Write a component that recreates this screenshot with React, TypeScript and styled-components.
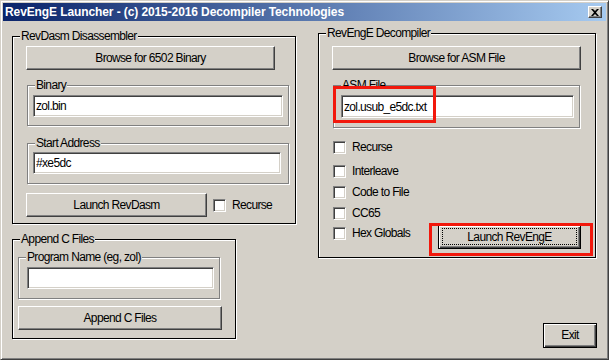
import React from "react";
import styled, { createGlobalStyle } from "styled-components";

const GlobalStyle = createGlobalStyle`
  html, body {
    margin: 0;
    padding: 0;
    background: #d4d0c8;
  }
  body {
    font-family: "Liberation Sans", Arial, sans-serif;
    font-size: 12px;
    color: #000;
  }
`;

const FACE = "#d4d0c8";
const RED = "#f2180c";
const TEXT_SPACING = "-0.65px";

const Window = styled.div`
  box-sizing: border-box;
  width: 609px;
  height: 360px;
  display: flex;
  flex-direction: column;
  background: ${FACE};
  border: 1px solid;
  border-color: ${FACE} #404040 #404040 ${FACE};
  box-shadow: inset 1px 1px 0 #fff, inset -1px -1px 0 #808080;
  padding: 2px;
`;

const TitleBar = styled.div`
  height: 18px;
  flex: none;
  display: flex;
  align-items: center;
  justify-content: space-between;
  padding: 0 4px 0 2px;
  background: linear-gradient(to right, #0a246a, #a6caf0);
`;

const TitleText = styled.span`
  color: #fff;
  font-weight: bold;
  font-size: 12px;
  letter-spacing: -0.1px;
  white-space: nowrap;
`;

const CloseButton = styled.div`
  box-sizing: border-box;
  width: 14px;
  height: 12px;
  display: flex;
  align-items: center;
  justify-content: center;
  background: ${FACE};
  border: 1px solid;
  border-color: #fff #404040 #404040 #fff;
  box-shadow: inset -1px -1px 0 #808080;
`;

const Body = styled.div`
  flex: 1;
  display: flex;
  gap: 22px;
  padding: 12px 0 0 9px;
`;

const Column = styled.div<{ $w: number }>`
  width: ${(p) => p.$w}px;
  display: flex;
  flex-direction: column;
  align-items: flex-start;
`;

const Group = styled.div<{
  $w: number;
  $h: number;
  $inner?: boolean;
  $mt?: number;
  $ml?: number;
  $pad?: string;
}>`
  position: relative;
  box-sizing: border-box;
  width: ${(p) => p.$w}px;
  height: ${(p) => p.$h}px;
  margin-top: ${(p) => p.$mt ?? 0}px;
  margin-left: ${(p) => p.$ml ?? 0}px;
  padding: ${(p) => p.$pad ?? "0"};
  border: 1px solid ${(p) => (p.$inner ? "#808080" : "#000")};
  box-shadow: inset 1px 1px 0 #fff, 1px 1px 0 #fff;
  display: flex;
  flex-direction: column;
  align-items: flex-start;
`;

const Caption = styled.span`
  position: absolute;
  top: -8px;
  left: 7px;
  padding: 0 1px;
  line-height: 14px;
  background: ${FACE};
  white-space: nowrap;
  letter-spacing: ${TEXT_SPACING};
`;

const Button = styled.button<{
  $w: number;
  $h: number;
  $mt?: number;
  $ml?: number;
  $default?: boolean;
}>`
  box-sizing: border-box;
  width: ${(p) => p.$w}px;
  height: ${(p) => p.$h}px;
  margin: ${(p) => p.$mt ?? 0}px 0 0 ${(p) => p.$ml ?? 0}px;
  padding: 0;
  display: flex;
  align-items: stretch;
  justify-content: center;
  font-family: "Liberation Sans", Arial, sans-serif;
  font-size: 12px;
  letter-spacing: ${TEXT_SPACING};
  color: #000;
  background: ${FACE};
  border: 1px solid;
  border-color: ${(p) => (p.$default ? "#000" : "#fff #404040 #404040 #fff")};
  box-shadow: ${(p) =>
    p.$default
      ? "inset 1px 1px 0 #fff, inset -1px -1px 0 #404040, inset -2px -2px 0 #808080"
      : "inset -1px -1px 0 #808080"};
  flex: none;
`;

const ButtonLabel = styled.span`
  flex: 1;
  display: flex;
  align-items: center;
  justify-content: center;
  padding-bottom: 1px;
`;

const FocusRing = styled.span`
  flex: 1;
  display: flex;
  align-items: center;
  justify-content: center;
  margin: 2px 3px 3px 3px;
  border: 1px dotted #000;
`;

const Field = styled.input<{ $w: number; $h: number; $mt: number; $ml: number }>`
  box-sizing: border-box;
  width: ${(p) => p.$w}px;
  height: ${(p) => p.$h}px;
  margin: ${(p) => p.$mt}px 0 0 ${(p) => p.$ml}px;
  padding: 0 2px;
  font-family: "Liberation Sans", Arial, sans-serif;
  font-size: 12px;
  letter-spacing: ${TEXT_SPACING};
  color: #000;
  background: #fff;
  outline: none;
  border: 1px solid;
  border-color: #808080 #fff #fff #808080;
  box-shadow: inset 1px 1px 0 #404040, inset -1px -1px 0 ${FACE};
`;

const CheckRow = styled.div<{ $mt?: number; $ml?: number }>`
  display: flex;
  align-items: center;
  height: 13px;
  margin-top: ${(p) => p.$mt ?? 0}px;
  margin-left: ${(p) => p.$ml ?? 0}px;
  gap: 6px;
  flex: none;
`;

const CheckBox = styled.span`
  box-sizing: border-box;
  width: 13px;
  height: 13px;
  background: #fff;
  border: 1px solid;
  border-color: #808080 #fff #fff #808080;
  box-shadow: inset 1px 1px 0 #404040, inset -1px -1px 0 ${FACE};
`;

const CheckLabel = styled.span`
  line-height: 13px;
  letter-spacing: ${TEXT_SPACING};
  white-space: nowrap;
`;

const ButtonRow = styled.div<{ $mt: number }>`
  display: flex;
  align-items: center;
  margin-top: ${(p) => p.$mt}px;
`;

const ActionRow = styled.div`
  align-self: stretch;
  display: flex;
  align-items: flex-start;
  margin-top: 5px;
`;

const Highlighted = styled.div<{ $ml?: string; $mr?: number }>`
  position: relative;
  margin-left: ${(p) => p.$ml ?? "0"};
  margin-right: ${(p) => p.$mr ?? 0}px;
`;

const RedBox = styled.div<{ $l: number; $t: number; $w: number; $h: number }>`
  position: absolute;
  left: ${(p) => p.$l}px;
  top: ${(p) => p.$t}px;
  width: ${(p) => p.$w}px;
  height: ${(p) => p.$h}px;
  box-sizing: border-box;
  border: 3px solid ${RED};
  pointer-events: none;
`;

const ExitSlot = styled.div`
  align-self: flex-end;
  margin-top: 65px;
  margin-right: -1px;
`;

const Check = ({ label, mt, ml }: { label: string; mt?: number; ml?: number }) => (
  <CheckRow $mt={mt} $ml={ml}>
    <CheckBox />
    <CheckLabel>{label}</CheckLabel>
  </CheckRow>
);

const App = () => {
  return (
    <>
      <GlobalStyle />
      <Window>
        <TitleBar>
          <TitleText>RevEngE Launcher - (c) 2015-2016 Decompiler Technologies</TitleText>
          <CloseButton>
            <svg width="8" height="7" viewBox="0 0 8 7">
              <path d="M0 0h2l2 2 2-2h2L5 3.5 8 7H6L4 5 2 7H0l3-3.5z" fill="#000" />
            </svg>
          </CloseButton>
        </TitleBar>

        <Body>
          <Column $w={284}>
            <Group $w={284} $h={188} $mt={3} $pad="9px 0 0 13px">
              <Caption>RevDasm Disassembler</Caption>
              <Button $w={249} $h={24}>
                <ButtonLabel>Browse for 6502 Binary</ButtonLabel>
              </Button>

              <Group $inner $w={262} $h={41} $mt={15} $ml={1}>
                <Caption>Binary</Caption>
                <Field $w={250} $h={22} $mt={9} $ml={5} defaultValue="zol.bin" readOnly />
              </Group>

              <Group $inner $w={262} $h={41} $mt={17} $ml={1}>
                <Caption>Start Address</Caption>
                <Field $w={248} $h={22} $mt={8} $ml={5} defaultValue="#xe5dc" readOnly />
              </Group>

              <ButtonRow $mt={9}>
                <Button $w={181} $h={24}>
                  <ButtonLabel>Launch RevDasm</ButtonLabel>
                </Button>
                <Check label="Recurse" ml={6} />
              </ButtonRow>
            </Group>

            <Group $w={224} $h={100} $mt={15} $pad="0 0 0 5px">
              <Caption>Append C Files</Caption>
              <Group $inner $w={202} $h={42} $mt={17}>
                <Caption>Program Name (eg, zol)</Caption>
                <Field $w={187} $h={22} $mt={9} $ml={8} defaultValue="" readOnly />
              </Group>
              <Button $w={204} $h={24} $mt={7}>
                <ButtonLabel>Append C Files</ButtonLabel>
              </Button>
            </Group>
          </Column>

          <Column $w={278}>
            <Group $w={278} $h={225} $pad="12px 0 0 13px">
              <Caption>RevEngE Decompiler</Caption>
              <Button $w={249} $h={24}>
                <ButtonLabel>Browse for ASM File</ButtonLabel>
              </Button>

              <Group $inner $w={247} $h={43} $mt={15} $ml={1}>
                <Caption>ASM File</Caption>
                <Field $w={233} $h={23} $mt={9} $ml={7} defaultValue="zol.usub_e5dc.txt" readOnly />
                <RedBox $l={-1} $t={0} $w={103} $h={37} />
              </Group>

              <Check label="Recurse" mt={13} ml={1} />
              <Check label="Interleave" mt={11} ml={1} />
              <Check label="Code to File" mt={8} ml={1} />
              <Check label="CC65" mt={8} ml={1} />

              <ActionRow>
                <Check label="Hex Globals" mt={2} ml={1} />
                <Highlighted $ml="auto" $mr={14}>
                  <Button $w={143} $h={24} $default>
                    <FocusRing>Launch RevEngE</FocusRing>
                  </Button>
                  <RedBox $l={-9} $t={-2} $w={164} $h={33} />
                </Highlighted>
              </ActionRow>
            </Group>

            <ExitSlot>
              <Button $w={54} $h={25} $default>
                <ButtonLabel>Exit</ButtonLabel>
              </Button>
            </ExitSlot>
          </Column>
        </Body>
      </Window>
    </>
  );
};

export default App;
